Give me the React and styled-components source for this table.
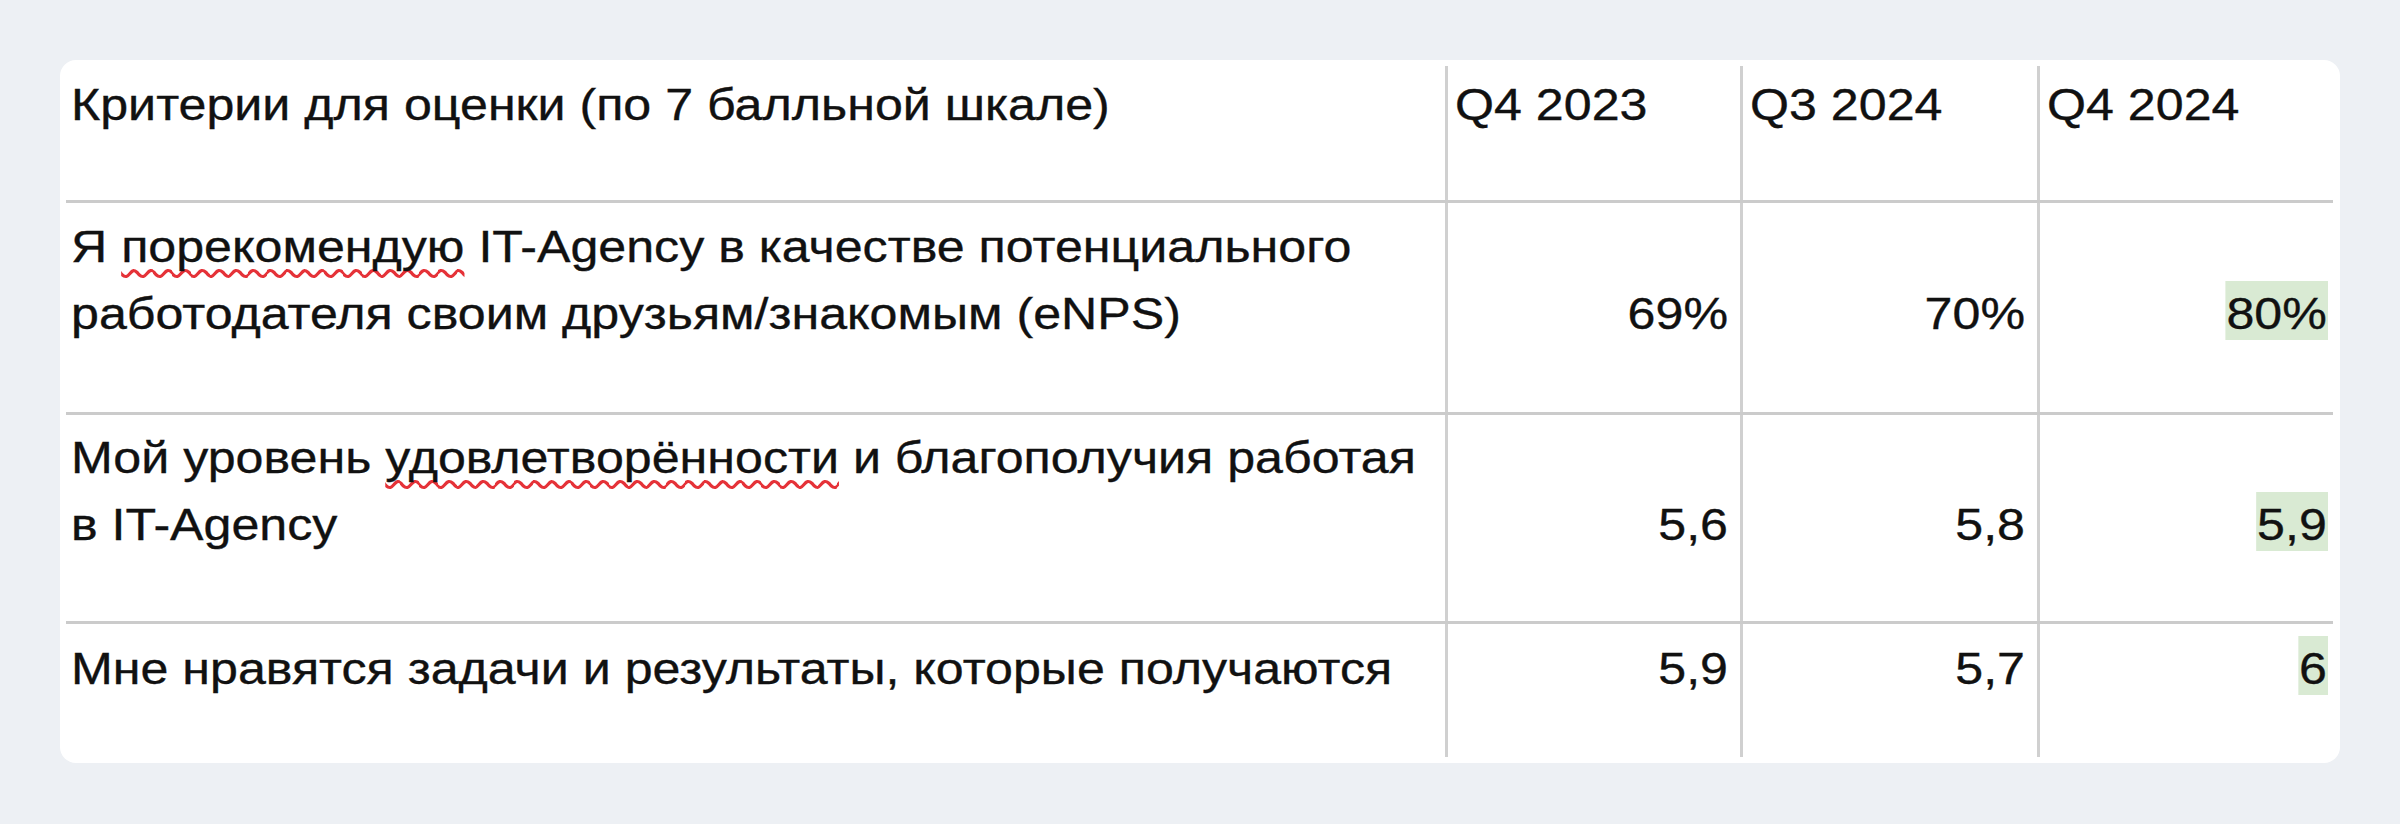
import styled, { createGlobalStyle } from "styled-components";

// the source screenshot is stretched sideways, so text is widened to match
const STRETCH = 1.14;
const LINE = 67;

const GlobalStyle = createGlobalStyle`
  html, body {
    margin: 0;
    background: #edf0f4;
  }
  body {
    font-family: "Liberation Sans", Arial, sans-serif;
    color: #111;
  }
`;

const Page = styled.div`
  box-sizing: border-box;
  min-height: 824px;
  padding: 60px;
`;

const Card = styled.div`
  box-sizing: border-box;
  width: 2280px;
  height: 703px;
  padding: 6px 7px 6px 6px;
  background: #fff;
  border-radius: 16px;
`;

const Table = styled.div`
  display: flex;
  flex-direction: column;
`;

const Row = styled.div`
  box-sizing: border-box;
  display: grid;
  grid-template-columns: 1379px 295px 297px 296px;
  height: ${(p) => p.$h}px;
  border-top: ${(p) => (p.$head ? "none" : "3px solid #cbcbcb")};
`;

const Cell = styled.div`
  padding-top: ${(p) => p.$pad}px;
  padding-left: ${(p) => (p.$first ? 5 : 7)}px;
  padding-right: ${(p) => p.$right || 0}px;
  border-left: ${(p) => (p.$first ? "none" : "3px solid #d0d0d0")};
  font-size: 44px;
  line-height: ${LINE}px;
  text-align: ${(p) => (p.$num ? "right" : "left")};
`;

const Text = styled.div`
  white-space: nowrap;
  -webkit-text-stroke: 0.35px #111;
  transform: scaleX(${STRETCH});
  transform-origin: ${(p) => (p.$num ? "right" : "left")} top;
`;

const Typo = styled.span`
  text-decoration: underline wavy #e53238;
  text-decoration-thickness: 2.5px;
  text-underline-offset: 7px;
  text-decoration-skip-ink: none;
`;

const Mark = styled.span`
  background: #d9ead3;
  padding: 8px 1px 2px;
`;

const quarters = ["Q4 2023", "Q3 2024", "Q4 2024"];
const rightPad = [12, 12, 5];

const rows = [
  {
    h: 212,
    pad: 10,
    lines: [
      <>
        Я <Typo>порекомендую</Typo> IT-Agency в качестве потенциального
      </>,
      "работодателя своим друзьям/знакомым (eNPS)",
    ],
    values: ["69%", "70%", "80%"],
  },
  {
    h: 209,
    pad: 9,
    lines: [
      <>
        Мой уровень <Typo>удовлетворённости</Typo> и благополучия работая
      </>,
      "в IT-Agency",
    ],
    values: ["5,6", "5,8", "5,9"],
  },
  {
    h: 136,
    pad: 11,
    lines: ["Мне нравятся задачи и результаты, которые получаются"],
    values: ["5,9", "5,7", "6"],
  },
];

export default function App() {
  return (
    <>
      <GlobalStyle />
      <Page>
        <Card>
          <Table>
            <Row $head $h={134}>
              <Cell $first $pad={5}>
                <Text>Критерии для оценки (по 7 балльной шкале)</Text>
              </Cell>
              {quarters.map((q) => (
                <Cell key={q} $pad={5}>
                  <Text>{q}</Text>
                </Cell>
              ))}
            </Row>
            {rows.map((row, i) => (
              <Row key={i} $h={row.h}>
                <Cell $first $pad={row.pad}>
                  <Text>
                    {row.lines.map((line, j) => (
                      <div key={j}>{line}</div>
                    ))}
                  </Text>
                </Cell>
                {row.values.map((v, j) => (
                  <Cell
                    key={j}
                    $num
                    $right={rightPad[j]}
                    $pad={row.pad + (row.lines.length - 1) * LINE}
                  >
                    <Text $num>{j === 2 ? <Mark>{v}</Mark> : v}</Text>
                  </Cell>
                ))}
              </Row>
            ))}
          </Table>
        </Card>
      </Page>
    </>
  );
}
